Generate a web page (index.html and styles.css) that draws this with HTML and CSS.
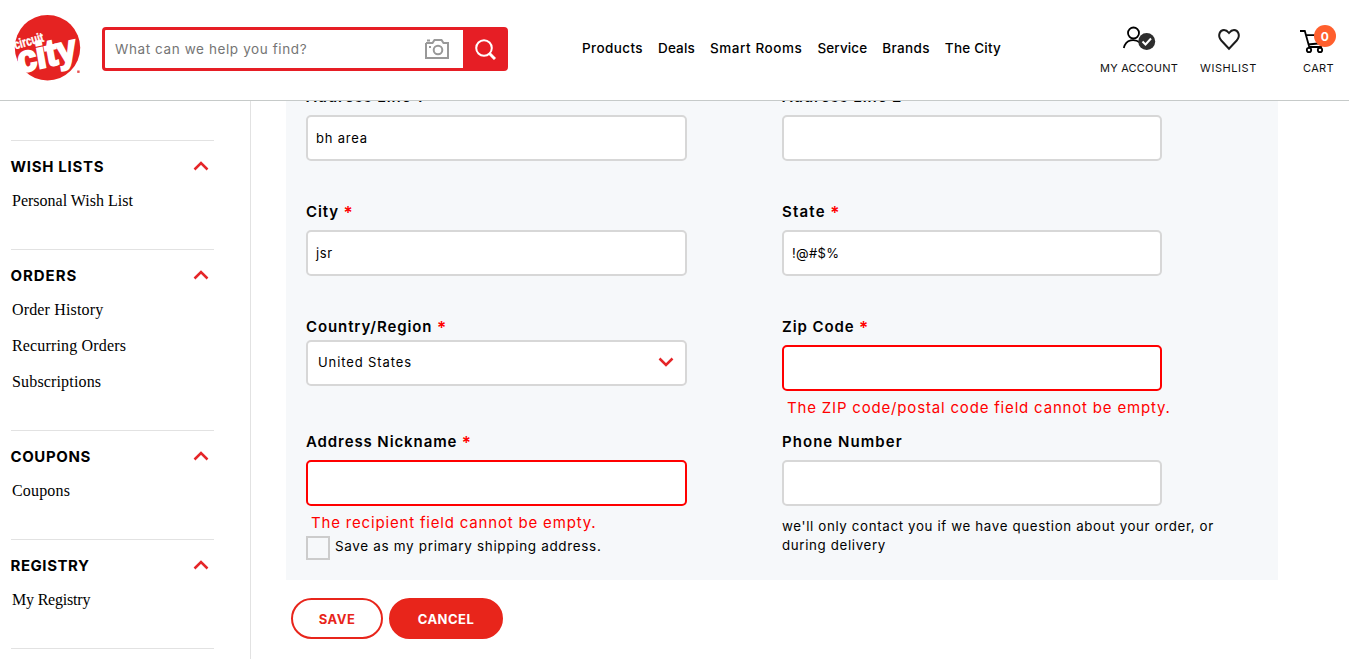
FILE: index.html
```html
<!DOCTYPE html>
<html lang="en">
<head>
<meta charset="utf-8">
<title>Circuit City - Address Book</title>
<link rel="stylesheet" href="styles.css">
</head>
<body>
<header class="header">
  <svg class="logo" width="68" height="68" viewBox="0 0 68 68">
    <circle cx="33.500" cy="33.700" r="32.700" fill="#e52322"/>
    <g fill="#fff" font-family="Liberation Sans" font-weight="700" stroke="#fff">
      <text transform="translate(1.500 35.500) rotate(-16)" font-size="13.500" stroke-width=".4" textLength="30" lengthAdjust="spacingAndGlyphs">circuit</text>
      <text transform="translate(5.500 59) rotate(-13) skewX(-3)" font-size="37" stroke-width="2.200" textLength="60" lengthAdjust="spacingAndGlyphs">city</text>
    </g>
    <rect x="63.200" y="56.500" width="2.400" height="2.400" fill="#e8504f"/>
  </svg>
  <div class="search">
    <span class="search-text">What can we help you find?</span>
    <svg class="camera" width="24" height="20" viewBox="0 0 24 20" fill="none" stroke="#999" stroke-width="2">
      <path d="M1 4V19H23V4H18.500L16.500 1H9.500L7.500 4H1M2 1.500H5"/><circle cx="13" cy="11" r="4.300"/><path d="M4 8H6"/>
    </svg>
    <button class="search-btn"><svg width="21" height="21" viewBox="0 0 21 21" fill="none" stroke="#fff" stroke-width="2"><circle cx="9" cy="9" r="7.800"/><path d="M14.500 14.500L20 20" stroke-width="3"/></svg></button>
  </div>
  <nav class="nav">
    <a class="n1">Products</a><a class="n2">Deals</a><a class="n3">Smart Rooms</a><a class="n4">Service</a><a class="n5">Brands</a><a class="n6">The City</a>
  </nav>
  <div class="tools">
    <a class="tool account"><svg width="34" height="30" viewBox="0 0 34 30" fill="none" stroke="#000" stroke-width="1.800"><circle cx="11.500" cy="7" r="5.500"/><path d="M1.800 22C4 13 12.500 12.500 18 16.500"/><circle cx="24.700" cy="15.500" r="8.500" fill="#2d2d2d" stroke="none"/><path d="M20.500 15.500L23.500 18.500L29 12.500" stroke="#fff" stroke-width="2"/></svg><span>MY ACCOUNT</span></a>
    <a class="tool wish"><svg width="24" height="30" viewBox="0 0 24 30" fill="none" stroke="#1c1c1c" stroke-width="2"><path d="M12 22.800L4.300 14.500C0 9.500 3 4 7 4C9.500 4 10.800 5.500 12 7C13.200 5.500 14.500 4 17 4C21 4 24 9.500 19.700 14.500Z"/></svg><span>WISHLIST</span></a>
    <a class="tool cart"><svg width="37" height="30" viewBox="0 0 37 30" fill="none" stroke="#000" stroke-width="1.800"><path d="M0 5H4.800L9.300 21H22M6 9.200H23M8 18.500L23 17"/><circle cx="9" cy="24" r="2.200"/><circle cx="20" cy="24" r="2.200"/></svg><span>CART</span><b class="badge">0</b></a>
  </div>
</header>
<div class="page">
  <aside class="sidebar">
    <section><h2><span class="s1">WISH LISTS</span><svg width="16" height="10" viewBox="0 0 16 10"><path d="M1.500 8.500L8 2L14.500 8.500"/></svg></h2><a>Personal Wish List</a></section>
    <section><h2><span class="s2">ORDERS</span><svg width="16" height="10" viewBox="0 0 16 10"><path d="M1.500 8.500L8 2L14.500 8.500"/></svg></h2><a class="wide">Order History</a><a class="wide">Recurring Orders</a><a class="wide">Subscriptions</a></section>
    <section><h2><span class="s3">COUPONS</span><svg width="16" height="10" viewBox="0 0 16 10"><path d="M1.500 8.500L8 2L14.500 8.500"/></svg></h2><a class="wide">Coupons</a></section>
    <section><h2><span class="s4">REGISTRY</span><svg width="16" height="10" viewBox="0 0 16 10"><path d="M1.500 8.500L8 2L14.500 8.500"/></svg></h2><a class="tight">My Registry</a></section>
    <section></section>
  </aside>
  <main class="main">
    <form class="panel">
      <div class="field"><label class="line">Address Line 1</label><div class="input">bh area</div></div>
      <div class="field"><label>Address Line 2</label><div class="input"></div></div>
      <div class="field"><label>City<i>*</i></label><div class="input jsr">jsr</div></div>
      <div class="field"><label class="state">State<i>*</i></label><div class="input symbols">!@#$%</div></div>
      <div class="field country"><label>Country/Region<i>*</i></label><div class="input"><span>United States</span><svg width="16" height="10" viewBox="0 0 16 10"><path d="M1.500 1.500L8 8L14.500 1.500"/></svg></div></div>
      <div class="field"><label>Zip Code<i>*</i></label><div class="input bad"></div><p class="error">The ZIP code/postal code field cannot be empty.</p></div>
      <div class="field"><label>Address Nickname<i>*</i></label><div class="input bad"></div><p class="error">The recipient field cannot be empty.</p><div class="check"><span class="box"></span><span>Save as my primary shipping address.</span></div></div>
      <div class="field"><label class="phone">Phone Number</label><div class="input"></div><p class="note">we'll only contact you if we have question about your order, or<br>during delivery</p></div>
    </form>
    <div class="actions"><button type="button" class="save">SAVE</button><button type="button" class="cancel">CANCEL</button></div>
  </main>
</div>
</body>
</html>
```
FILE: styles.css
```css
* { box-sizing: border-box; }
body { margin: 0; height: 659px; overflow: hidden; background: #fff; color: #000; font: 14px/20px Inter, sans-serif; }
button { font: inherit; cursor: pointer; }

/* Header */
.header { display: flex; height: 101px; border-bottom: 1px solid #c6cac9; }
.logo { margin: 14px 20px 0 14px; flex: none; overflow: visible; }
.search { display: flex; align-items: center; width: 406px; height: 44px; margin-top: 27px; border: 3px solid #e61e25; border-radius: 4px; padding-left: 10px; color: #757575; font-size: 13.5px; letter-spacing: .6px; flex: none; }
.camera { margin-left: auto; margin-right: 14px; }
.search-btn { display: flex; align-items: center; justify-content: center; width: 42px; height: 38px; padding: 0 0 0 3px; border: 0; background: #e61e25; }
.nav { display: flex; gap: 15px; margin: 38px 0 0 74px; font-weight: 500; font-size: 13.5px; white-space: nowrap; }
.n1 { letter-spacing: .4px; }
.n2 { letter-spacing: .16px; }
.n3 { letter-spacing: .57px; }
.n4 { letter-spacing: .14px; }
.n5 { letter-spacing: .35px; }
.n6 { letter-spacing: .22px; }
.tools { display: flex; margin: 26px 15px 0 auto; font-size: 11px; white-space: nowrap; }
.tool { position: relative; display: flex; flex-direction: column; align-items: center; gap: 2px; color: #111; }
.tool svg { flex: none; }
.account { width: 78px; letter-spacing: .22px; margin-right: 22px; }
.wish { width: 57px; letter-spacing: .55px; margin-right: 46px; }
.cart { width: 31px; letter-spacing: .35px; }
.badge { position: absolute; top: -1px; right: -2px; width: 22px; height: 22px; border-radius: 50%; background: #ff5f2d; color: #fff; font-size: 12px; line-height: 23px; text-align: center; }

/* Sidebar */
.page { display: flex; height: 558px; overflow: hidden; }
.sidebar { width: 251px; flex: none; padding: 39px 36px 0 11px; border-right: 1px solid #e2e2e2; }
.sidebar section { border-top: 1px solid #e2e2e2; padding-bottom: 30px; }
.sidebar h2 { display: flex; align-items: center; justify-content: space-between; margin: 16px 5.5px 6px -.5px; font-size: 15px; line-height: 20px; font-weight: 700; }
.sidebar h2 svg { margin-top: -2px; }
.s1 { letter-spacing: .7px; }
.s2 { letter-spacing: .95px; }
.s3 { letter-spacing: .6px; }
.s4 { letter-spacing: .55px; }
.sidebar section > a { display: table; line-height: 36px; margin-left: 1px; font-family: "Liberation Serif", serif; font-size: 16px; }
.sidebar .wide { letter-spacing: .16px; }
.sidebar .tight { letter-spacing: -.2px; }
.sidebar path, .input path { fill: none; stroke: #e52629; stroke-width: 2.5; }

/* Address form */
.main { flex: 1; }
.panel { display: grid; grid-template-columns: 476px 476px; grid-template-rows: 115px 115px 115px 148px; width: 992px; margin: -14px 0 0 35px; padding-left: 20px; background: #f6f8fa; }
.field label { display: flex; height: 20px; margin-bottom: 8px; font-size: 15px; font-weight: 600; letter-spacing: .9px; }
.field .phone { letter-spacing: 1.05px; }
.field .state { letter-spacing: 1.2px; }
.field i { color: #f00; font-style: normal; font-size: 17px; line-height: 23px; margin-left: 4.5px; }
.input { display: flex; align-items: center; justify-content: space-between; width: 381px; height: 46px; padding: 0 11px 0 8px; border: 2px solid #d7d7d7; border-radius: 5px; background: #fff; font-size: 13px; letter-spacing: .8px; }
.field:nth-child(even) .input { width: 380px; }
.jsr { letter-spacing: .6px; }
.field .symbols { letter-spacing: .35px; }
.country label { margin-bottom: 3px; }
.country .input { padding: 0 11px 2px 10px; letter-spacing: .9px; }
.field .bad { border-color: #f00; }
.error { margin: 7px 0 0 5px; color: #f00; font-size: 15px; line-height: 20px; letter-spacing: .82px; white-space: nowrap; }
.check { display: flex; gap: 5px; margin-top: 3px; font-size: 13.5px; letter-spacing: .66px; }
.box { width: 24px; height: 24px; border: 2px solid #ccc; }
.note { margin: 11px 0 0; font-size: 13.3px; line-height: 19px; letter-spacing: .65px; white-space: nowrap; }
.actions { display: flex; gap: 6px; margin: 18px 0 0 40px; }
.save, .cancel { height: 41px; width: 92px; padding: 0; border: 2px solid #e8251b; border-radius: 21px; background: #fff; color: #e8251b; font-weight: 700; font-size: 13px; letter-spacing: .5px; }
.cancel { width: 114px; background: #e8251b; color: #fff; }
```
